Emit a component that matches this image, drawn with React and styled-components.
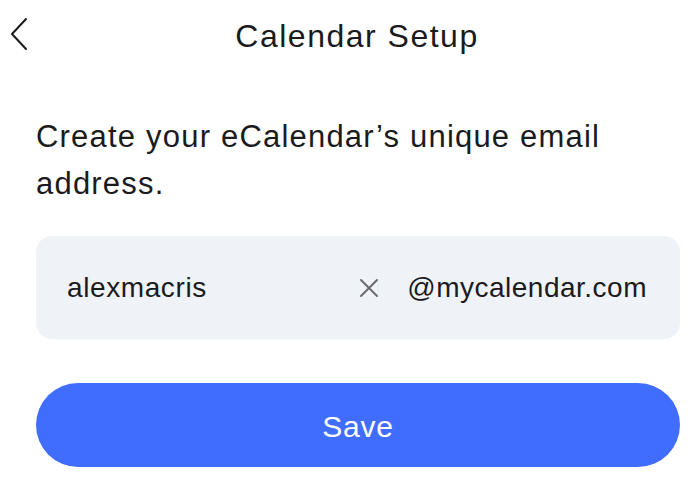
import styled, { createGlobalStyle } from "styled-components";

const GlobalStyle = createGlobalStyle`
  html, body {
    margin: 0;
    padding: 0;
    background: #ffffff;
    font-family: "Liberation Sans", Arial, sans-serif;
    color: #1b1b1d;
  }
`;

export default function App() {
  return (
    <>
      <GlobalStyle />
      <Page>
        <Header>
          <BackButton aria-label="Back">
            <svg width="20" height="34" viewBox="0 0 20 34" fill="none">
              <path d="M17 2 L3 17 L17 32" stroke="#1b1b1d" strokeWidth="2" strokeLinecap="round" strokeLinejoin="round" />
            </svg>
          </BackButton>
          <Title>Calendar Setup</Title>
        </Header>
        <Content>
          <Lead>Create your eCalendar’s unique email address.</Lead>
          <Field>
            <FieldValue>alexmacris</FieldValue>
            <ClearButton aria-label="Clear">
              <svg width="20" height="20" viewBox="0 0 20 20">
                <path d="M2 2 L18 18 M18 2 L2 18" stroke="#6b6b70" strokeWidth="2" strokeLinecap="round" />
              </svg>
            </ClearButton>
            <Domain>@mycalendar.com</Domain>
          </Field>
          <SaveButton>Save</SaveButton>
        </Content>
      </Page>
    </>
  );
}

const Page = styled.div`
  width: 700px;
  height: 493px;
  overflow: hidden;
`;

const Header = styled.div`
  position: relative;
  height: 72px;
  display: flex;
  align-items: center;
  justify-content: center;
  padding-left: 14px;
`;

const BackButton = styled.button`
  position: absolute;
  left: 9px;
  top: 17px;
  padding: 0;
  border: none;
  background: none;
  display: flex;
`;

const Title = styled.h1`
  margin: 0;
  font-size: 32px;
  font-weight: 400;
  letter-spacing: 1.5px;
`;

const Content = styled.div`
  padding: 41px 20px 0 36px;
  display: flex;
  flex-direction: column;
`;

const Lead = styled.p`
  margin: 0;
  width: 600px;
  font-size: 31px;
  line-height: 47px;
  letter-spacing: 1.2px;
`;

const Field = styled.div`
  margin-top: 29px;
  height: 103px;
  background: #eff2f7;
  border-radius: 16px;
  display: flex;
  align-items: center;
  padding: 0 33px 0 31px;
`;

const FieldValue = styled.span`
  flex: 1;
  font-size: 28px;
  letter-spacing: 0.6px;
`;

const ClearButton = styled.span`
  display: flex;
  margin-right: 28px;
`;

const Domain = styled.span`
  font-size: 28px;
  letter-spacing: 0.5px;
`;

const SaveButton = styled.button`
  margin-top: 44px;
  height: 84px;
  border: none;
  border-radius: 42px;
  background: #416dff;
  color: #ffffff;
  font-family: "Liberation Sans", Arial, sans-serif;
  font-size: 30px;
  letter-spacing: 0.8px;
  padding-top: 4px;
`;
